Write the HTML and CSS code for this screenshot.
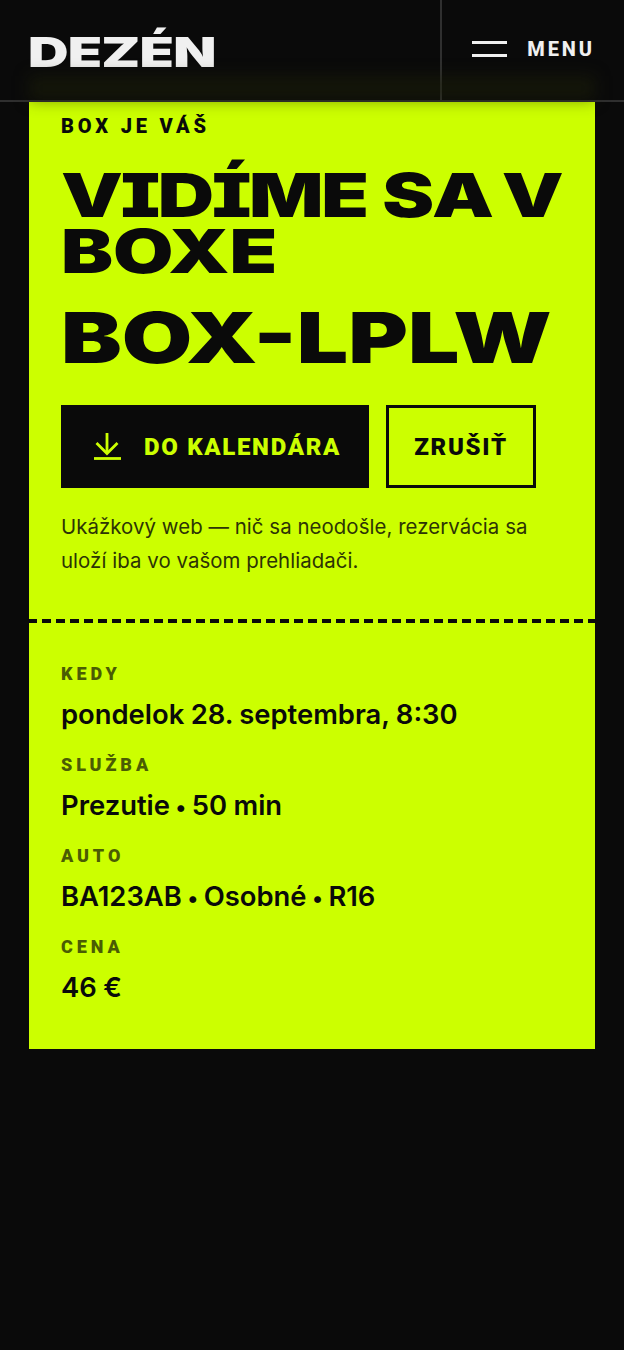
FILE: index.html
```html
<!DOCTYPE html>
<html lang="sk">
<head>
<meta charset="utf-8">
<title>Dezén</title>
<link rel="stylesheet" href="styles.css">
</head>
<body>
<header class="topbar">
  <div class="brand-cell"><a class="brand"><span class="wide">DEZÉN</span></a></div>
  <button class="menu-btn">
    <span class="burger"><i></i><i></i></span>
    <span class="menu-label">MENU</span>
  </button>
</header>
<main class="page">
  <section class="ticket">
    <div class="ticket-top">
      <p class="eyebrow">BOX JE VÁŠ</p>
      <h1 class="title"><span class="wide"><span class="title-tight">VIDÍME</span> <span class="title-tail">SA V</span><br>BOXE</span></h1>
      <p class="code"><span class="wide">BOX-LPLW</span></p>
      <div class="actions">
        <a class="btn btn-solid">
          <svg class="btn-icon" viewBox="0 0 28 28" width="28" height="28" fill="none" stroke="currentColor" stroke-width="2.8" aria-hidden="true"><path d="M14 0v20"/><path d="M3.5 10L14 20.5 24.5 10"/><path d="M1 25.5h27"/></svg>
          <span>DO KALENDÁRA</span>
        </a>
        <a class="btn btn-outline">ZRUŠIŤ</a>
      </div>
      <p class="note">Ukážkový web — nič sa neodošle, rezervácia sa uloží iba vo vašom prehliadači.</p>
    </div>
    <div class="perforation"></div>
    <dl class="details">
      <dt>KEDY</dt><dd>pondelok 28. septembra, 8:30</dd>
      <dt>SLUŽBA</dt><dd>Prezutie <span class="sep">•</span> 50 min</dd>
      <dt>AUTO</dt><dd>BA123AB <span class="sep">•</span> Osobné <span class="sep">•</span> R16</dd>
      <dt>CENA</dt><dd>46 €</dd>
    </dl>
  </section>
</main>
</body>
</html>
```
FILE: styles.css
```css
* { box-sizing: border-box; }
html, body { margin: 0; padding: 0; }
body { background: #0a0a0a; color: #0a0a0a; font-family: "Inter", "Liberation Sans", sans-serif; min-height: 1350px; overflow: hidden; }
.wide { display: inline-block; transform-origin: left top; white-space: nowrap; font-family: "Inter", "Liberation Sans", sans-serif; font-weight: 900; font-feature-settings: "cv08"; }
.topbar { height: 102px; display: flex; border-bottom: 2px solid #2f2f2f; position: relative; background: #0a0a0a; }
.topbar::after { content: ""; position: absolute; left: 29px; right: 29px; top: 76px; height: 24px; background: rgba(30, 34, 8, .5); filter: blur(8px); pointer-events: none; }
.brand-cell { flex: 1; padding: 28px 0 0 28px; border-right: 2px solid #2f2f2f; }
.brand { color: #f0f0f0; font-size: 41px; line-height: 48px; display: block; }
.brand .wide { transform: scaleX(1.37); letter-spacing: -.6px; }
.menu-btn { width: 182px; background: none; border: 0; padding: 0 29px 2px 30px; display: flex; align-items: center; justify-content: space-between; color: #f0f0f0; position: relative; z-index: 1; }
.burger { display: flex; flex-direction: column; gap: 10px; width: 35px; }
.burger i { display: block; height: 3px; background: #f0f0f0; }
.menu-label { font-family: "Roboto", sans-serif; font-weight: 800; font-size: 20px; letter-spacing: 2.9px; line-height: 24px; }
.page { padding: 0 29px; }
.ticket { background: #ccff00; }
.ticket-top { padding: 12px 32px 41px; }
.eyebrow { margin: 0; font-family: "Roboto", sans-serif; font-weight: 900; font-size: 20px; line-height: 24px; letter-spacing: 3.85px; }
.title { margin: 29px 0 0; font-size: 60px; line-height: 56px; font-weight: 900; height: 112px; }
.title .wide { transform: scaleX(1.3); }
.title-tight { letter-spacing: -1.8px; }
.title-tail { word-spacing: -6px; }
.code { margin: 21px 0 0; font-size: 70px; line-height: 76px; height: 76px; }
.code .wide { transform: scaleX(1.3); }
.actions { display: flex; gap: 17px; margin-top: 29px; }
.btn { height: 83px; display: flex; align-items: center; font-family: "Roboto", sans-serif; font-weight: 900; font-size: 24px; letter-spacing: 1.7px; }
.btn-solid { width: 308px; background: #0a0a0a; color: #ccff00; padding-left: 32px; gap: 23px; }
.btn-icon { flex: none; }
.btn-outline { width: 150px; border: 3px solid #0a0a0a; justify-content: center; }
.note { margin: 22px 0 0; font-size: 20.4px; line-height: 34px; color: #2c3405; letter-spacing: .06px; }
.perforation { height: 4px; background: repeating-linear-gradient(to right, #0a0a0a -1px 8px, transparent 8px 13px); }
.details { margin: 0; padding: 40px 32px 45px; }
.details dt { font-family: "Roboto", sans-serif; font-weight: 900; font-size: 18px; line-height: 22px; letter-spacing: 3.9px; color: #4a5c03; }
.details dd { margin: 13px 0 23px; font-weight: 600; font-size: 27.4px; line-height: 33px; word-spacing: -.5px; }
.details dd:last-child { margin-bottom: 0; }
.sep { font-size: 22px; line-height: 1; margin: 0 -1px; }
```
